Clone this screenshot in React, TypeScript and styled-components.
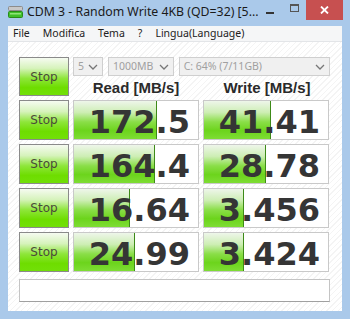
import styled, { createGlobalStyle } from "styled-components";

const GlobalStyle = createGlobalStyle`
  html, body {
    margin: 0;
    padding: 0;
    background: #ffffff;
  }
`;

const Window = styled.div`
  width: 350px;
  height: 319px;
  box-sizing: border-box;
  background: #aac9ea;
  display: flex;
  flex-direction: column;
  padding: 0 8px 8px 8px;
  font-family: "Noto Sans", "Open Sans", sans-serif;
  overflow: hidden;
`;

const TitleBar = styled.div`
  height: 26px;
  display: flex;
  align-items: flex-start;
  margin-right: -1px;
`;

const AppIcon = styled.svg`
  margin-top: 6px;
  flex: none;
`;

const TitleText = styled.div`
  flex: 1;
  margin-left: 4px;
  margin-top: 3px;
  font-size: 12.3px;
  line-height: 18px;
  color: #1a1a1a;
  white-space: nowrap;
  overflow: hidden;
`;

const CaptionButton = styled.div<{ $w: number; $close?: boolean }>`
  width: ${(p) => p.$w}px;
  height: 20px;
  flex: none;
  display: flex;
  align-items: center;
  justify-content: center;
  background: ${(p) => (p.$close ? "#c75050" : "transparent")};
`;

const MinGlyph = styled.div`
  width: 8px;
  height: 2px;
  background: #333;
  margin-top: 5px;
`;

const MaxGlyph = styled.div`
  width: 7px;
  height: 5px;
  border: 1px solid #555;
  border-top-width: 2px;
  margin-bottom: 4px;
`;

const CloseGlyph = styled.svg`
  display: block;
`;

const MenuBar = styled.div`
  height: 15px;
  background: #f5f6f7;
  border-bottom: 1px solid #e3e5e8;
  display: flex;
  align-items: center;
  gap: 13px;
  padding-left: 5px;
`;

const MenuItem = styled.span`
  font-size: 10.5px;
  color: #222;
  line-height: 15px;
`;

const Client = styled.div`
  flex: 1;
  background: repeating-linear-gradient(
    135deg,
    #ffffff 0px,
    #ffffff 3px,
    #f4f4f4 3px,
    #f4f4f4 4px
  );
  padding: 15px 12px 0 11px;
  display: flex;
  flex-direction: column;
`;

const Grid = styled.div`
  display: grid;
  grid-template-columns: 50px 126px 126px;
  grid-template-rows: 39px repeat(4, 40px);
  column-gap: 4px;
  row-gap: 4px;
`;

const StopButton = styled.div`
  box-sizing: border-box;
  border: 1px solid #8a8a8a;
  background: linear-gradient(
    to bottom,
    #f6fbf1 0%,
    #d6f3bb 28%,
    #8ee63a 55%,
    #6edd00 80%,
    #72e008 100%
  );
  display: flex;
  align-items: center;
  justify-content: center;
  font-family: "DejaVu Sans", sans-serif;
  font-size: 12px;
  color: #4a4a3a;
`;

const TopArea = styled.div`
  grid-column: 2 / span 2;
  display: flex;
  flex-direction: column;
`;

const SelectRow = styled.div`
  display: flex;
  gap: 5px;
  height: 19px;
  margin-right: -1px;
`;

const Select = styled.div<{ $w: number }>`
  width: ${(p) => p.$w}px;
  box-sizing: border-box;
  border: 1px solid #cfcfcf;
  background: #f0f0f0;
  display: flex;
  align-items: center;
  justify-content: space-between;
  padding: 0 4px 0 4px;
  font-size: 10.5px;
  color: #a0a0a0;
  line-height: 17px;
`;

const Chevron = styled.svg`
  flex: none;
`;

const HeaderRow = styled.div`
  flex: 1;
  display: grid;
  grid-template-columns: 126px 126px;
  column-gap: 5px;
  padding-top: 3px;
`;

const Header = styled.div`
  font-family: "Liberation Sans", Arial, sans-serif;
  font-weight: bold;
  font-size: 15px;
  color: #2a2a2a;
  text-align: center;
  line-height: 18px;
`;

const ValueCell = styled.div`
  position: relative;
  box-sizing: border-box;
  border: 1px solid #c9c9c9;
  background: #ffffff;
  overflow: hidden;
`;

const Bar = styled.div`
  position: absolute;
  left: 0;
  top: 0;
  bottom: 0;
  background: linear-gradient(
    to bottom,
    #eef6ea 0%,
    #cdeeb4 30%,
    #8ade48 55%,
    #6cd41c 78%,
    #7edd34 100%
  );
  border-right: 1px solid #3d8a18;
`;

const Value = styled.div`
  position: relative;
  height: 100%;
  display: flex;
  align-items: center;
  justify-content: flex-end;
  padding-right: 8px;
  padding-top: 3px;
  box-sizing: border-box;
  font-family: "DejaVu Sans", sans-serif;
  font-weight: bold;
  font-size: 32px;
  color: #353535;
`;

const Comment = styled.div`
  margin-top: 7px;
  height: 23px;
  width: 311px;
  box-sizing: border-box;
  border: 1px solid #c4c4c4;
  border-bottom-color: #a0a0a0;
  background: #ffffff;
`;

const results = [
  { read: "172.5", readBar: 82, write: "41.41", writeBar: 66 },
  { read: "164.4", readBar: 80, write: "28.78", writeBar: 61 },
  { read: "16.64", readBar: 55, write: "3.456", writeBar: 39 },
  { read: "24.99", readBar: 60, write: "3.424", writeBar: 39 },
];

function Cell(props: { value: string; bar: number }) {
  return (
    <ValueCell>
      <Bar style={{ width: props.bar }} />
      <Value>{props.value}</Value>
    </ValueCell>
  );
}

function Down() {
  return (
    <Chevron width="10" height="6" viewBox="0 0 10 6">
      <path d="M1 1 L5 5 L9 1" fill="none" stroke="#777" strokeWidth="1.3" />
    </Chevron>
  );
}

export default function App() {
  return (
    <>
      <GlobalStyle />
      <Window>
        <TitleBar>
          <AppIcon width="15" height="12" viewBox="0 0 15 12">
            <rect x="0.5" y="0.5" width="14" height="4" rx="1" fill="#c8c8c8" stroke="#8c8c8c" />
            <rect x="0.5" y="5.5" width="14" height="6" rx="1" fill="#3fbf2a" stroke="#2a8a1a" />
            <rect x="2" y="7" width="11" height="1.5" fill="#8fe47a" />
          </AppIcon>
          <TitleText>CDM 3 - Random Write 4KB (QD=32) [5...</TitleText>
          <CaptionButton $w={24}>
            <MinGlyph />
          </CaptionButton>
          <CaptionButton $w={24}>
            <MaxGlyph />
          </CaptionButton>
          <CaptionButton $w={37} $close>
            <CloseGlyph width="9" height="8" viewBox="0 0 9 8">
              <path d="M1 0.5 L8 7.5 M8 0.5 L1 7.5" stroke="#fff" strokeWidth="1.8" />
            </CloseGlyph>
          </CaptionButton>
        </TitleBar>
        <MenuBar>
          <MenuItem>File</MenuItem>
          <MenuItem>Modifica</MenuItem>
          <MenuItem>Tema</MenuItem>
          <MenuItem>?</MenuItem>
          <MenuItem>Lingua(Language)</MenuItem>
        </MenuBar>
        <Client>
          <Grid>
            <StopButton>Stop</StopButton>
            <TopArea>
              <SelectRow>
                <Select $w={30}>
                  5 <Down />
                </Select>
                <Select $w={66}>
                  1000MB <Down />
                </Select>
                <Select $w={152}>
                  C: 64% (7/11GB) <Down />
                </Select>
              </SelectRow>
              <HeaderRow>
                <Header>Read [MB/s]</Header>
                <Header>Write [MB/s]</Header>
              </HeaderRow>
            </TopArea>
            {results.map((r, i) => [
              <StopButton key={"stop" + i}>Stop</StopButton>,
              <Cell key={"read" + i} value={r.read} bar={r.readBar} />,
              <Cell key={"write" + i} value={r.write} bar={r.writeBar} />,
            ])}
          </Grid>
          <Comment />
        </Client>
      </Window>
    </>
  );
}
